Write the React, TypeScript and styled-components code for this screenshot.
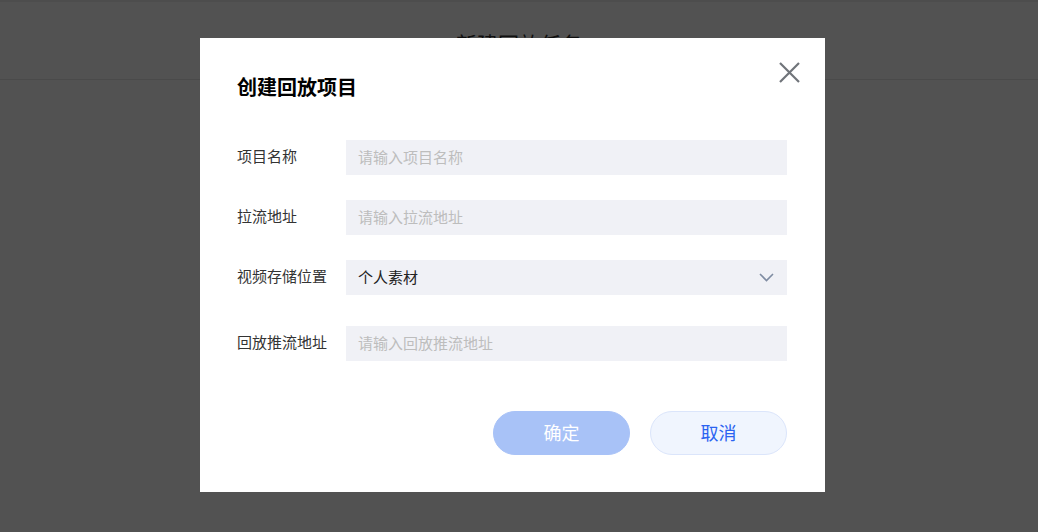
import styled, { createGlobalStyle } from "styled-components"

const GlobalStyle = createGlobalStyle`
  html, body {
    margin: 0;
    padding: 0;
    background: #fff;
    font-family: "Noto Sans CJK SC", "Noto Sans", sans-serif;
  }
  * { box-sizing: border-box; }
`

const Page = styled.div`
  width: 100%;
  height: 532px;
  background: #fff;
`

const Header = styled.div`
  height: 80px;
  display: flex;
  align-items: center;
  justify-content: center;
  padding-top: 4px;
  border-bottom: 1px solid #e6e6e6;
  border-top: 2px solid #eee;
  font-size: 21px;
  color: #333;
`

const Overlay = styled.div`
  position: fixed;
  inset: 0;
  background: rgba(0, 0, 0, 0.68);
  display: flex;
  align-items: flex-start;
  padding: 38px 0 0 200px;
`

const Modal = styled.div`
  position: relative;
  width: 625px;
  height: 454px;
  background: #fff;
  padding: 36px 38px 37px 37px;
  display: flex;
  flex-direction: column;
`

const Title = styled.h2`
  margin: 0;
  font-size: 20px;
  line-height: 26px;
  font-weight: 700;
  color: #000;
`

const CloseButton = styled.button`
  position: absolute;
  top: 24px;
  right: 25px;
  width: 21px;
  height: 21px;
  padding: 0;
  border: none;
  background: none;
  cursor: pointer;
  display: flex;
`

const Form = styled.div`
  margin-top: 40px;
  display: flex;
  flex-direction: column;
`

const Row = styled.div<{ $gap: number }>`
  display: flex;
  align-items: center;
  margin-top: ${p => p.$gap}px;
`

const Label = styled.label`
  width: 109px;
  font-size: 15px;
  line-height: 20px;
  margin-top: -3px;
  color: #333;
`

const Field = styled.div`
  position: relative;
  width: 441px;
  height: 35px;
  background: #f0f1f6;
  display: flex;
  align-items: center;
  padding: 0 12px 2px;
`

const Input = styled.input`
  width: 100%;
  border: none;
  outline: none;
  background: transparent;
  font-family: inherit;
  font-size: 15px;
  color: #333;
  padding: 0;
  &::placeholder { color: #bdbdbd; }
`

const SelectValue = styled.span`
  flex: 1;
  font-size: 15px;
  color: #222;
`

const Footer = styled.div`
  margin-top: 50px;
  display: flex;
  justify-content: flex-end;
  gap: 20px;
`

const Button = styled.button<{ $primary?: boolean }>`
  width: 137px;
  height: 44px;
  border-radius: 22px;
  font-family: inherit;
  font-size: 18px;
  padding: 0 0 2px;
  cursor: pointer;
  border: 1px solid ${p => (p.$primary ? "#a8c2f7" : "#dbe5fb")};
  background: ${p => (p.$primary ? "#a8c2f7" : "#f0f5fe")};
  color: ${p => (p.$primary ? "#fff" : "#2b63f1")};
`

const fields = [
  { label: "项目名称", placeholder: "请输入项目名称", gap: 0 },
  { label: "拉流地址", placeholder: "请输入拉流地址", gap: 25 },
]

const App = () => {
  return (
    <>
      <GlobalStyle />
      <Page>
        <Header>新建回放任务</Header>
      </Page>
      <Overlay>
        <Modal>
          <Title>创建回放项目</Title>
          <CloseButton aria-label="关闭">
            <svg width="21" height="21" viewBox="0 0 21 21">
              <path d="M1 1 L20 20 M20 1 L1 20" stroke="#70747a" strokeWidth="2.2" fill="none" />
            </svg>
          </CloseButton>
          <Form>
            {fields.map(f => (
              <Row key={f.label} $gap={f.gap}>
                <Label>{f.label}</Label>
                <Field>
                  <Input placeholder={f.placeholder} />
                </Field>
              </Row>
            ))}
            <Row $gap={25}>
              <Label>视频存储位置</Label>
              <Field>
                <SelectValue>个人素材</SelectValue>
                <svg width="15" height="9" viewBox="0 0 15 9" style={{ marginRight: 1, marginTop: 2 }}>
                  <path d="M1 1 L7.5 7.5 L14 1" stroke="#7f8ca2" strokeWidth="1.6" fill="none" />
                </svg>
              </Field>
            </Row>
            <Row $gap={31}>
              <Label>回放推流地址</Label>
              <Field>
                <Input placeholder="请输入回放推流地址" />
              </Field>
            </Row>
          </Form>
          <Footer>
            <Button $primary>确定</Button>
            <Button>取消</Button>
          </Footer>
        </Modal>
      </Overlay>
    </>
  )
}

export default App
